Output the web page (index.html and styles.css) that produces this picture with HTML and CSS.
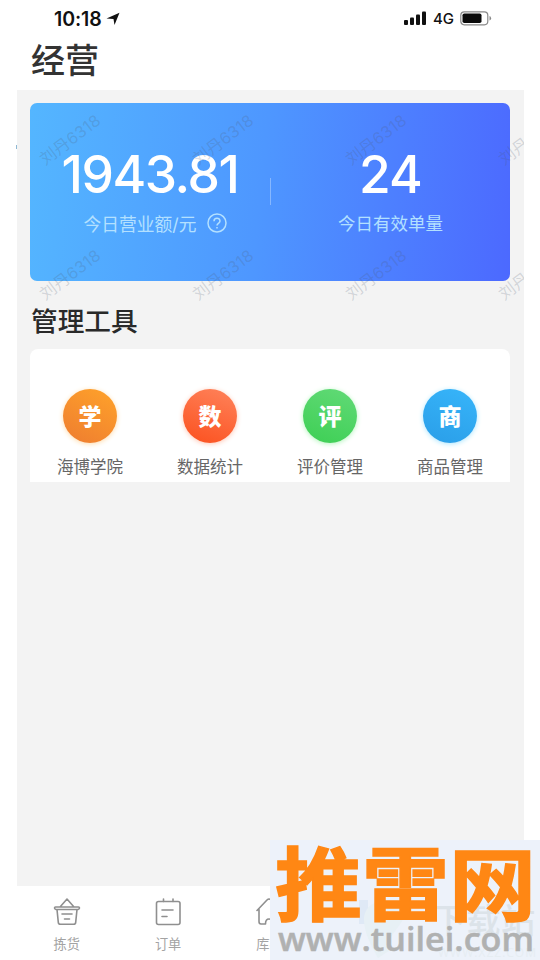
FILE: index.html
```html
<!DOCTYPE html>
<html lang="zh-CN">
<head>
<meta charset="utf-8">
<title>经营</title>
<link rel="stylesheet" href="styles.css">
</head>
<body>
<header class="status">
  <div class="clock"><span>10:18</span>
    <svg width="14" height="14" viewBox="0 0 14 14"><path d="M13.500 .8 8.500 13 7.500 7 .5 6.500z" fill="#111"/></svg>
  </div>
  <div class="signals">
    <svg width="23" height="15" viewBox="0 0 23 15" fill="#111"><rect x="0" y="9" width="4" height="5" rx="1"/><rect x="6" y="6.500" width="4" height="7.500" rx="1"/><rect x="12" y="3.500" width="4" height="10.500" rx="1"/><rect x="18" y="0.500" width="4" height="13.500" rx="1"/></svg>
    <span>4G</span>
    <svg width="32" height="15" viewBox="0 0 32 15"><rect x=".8" y=".8" width="27" height="13" rx="3.500" fill="#fff" stroke="#888" stroke-width="1.200"/><rect x="2.500" y="2.500" width="19" height="9.500" rx="1.800" fill="#0b0b0b"/><path d="M29.500 5v4.500q1.600-.6 1.600-2.250T29.500 5z" fill="#888"/></svg>
  </div>
</header>
<h1 class="title">经营</h1>
<main class="content">
  <section class="summary">
    <div class="metric sales">
      <strong>1943.81</strong>
      <p>今日营业额/元
        <svg width="20" height="20" viewBox="0 0 20 20" fill="none" stroke="#b3e0ff" stroke-width="1.500"><circle cx="10" cy="10" r="9"/><path d="M7 8.200C7 4.300 13 4.300 13 8c0 2.300-3 2.300-3 4.500M10 14v1.600"/></svg>
      </p>
    </div>
    <i class="divider"></i>
    <div class="metric orders">
      <strong>24</strong>
      <p>今日有效单量</p>
    </div>
  </section>
  <h2 class="subtitle">管理工具</h2>
  <section class="tools">
    <div class="tool"><b class="orange">学</b><span>海博学院</span></div>
    <div class="tool"><b class="red">数</b><span>数据统计</span></div>
    <div class="tool"><b class="green">评</b><span>评价管理</span></div>
    <div class="tool"><b class="blue">商</b><span>商品管理</span></div>
  </section>
  <div class="marks">
    <span class="m1">刘丹6318</span><span class="m2">刘丹6318</span><span class="m3">刘丹6318</span><span class="m4">刘丹</span>
    <span class="m1 low">刘丹6318</span><span class="m2 low">刘丹6318</span><span class="m3 low">刘丹6318</span><span class="m4 low">刘丹</span>
  </div>
</main>
<i class="speck"></i>
<nav class="tabs">
  <div class="tab">
    <svg width="28" height="30" viewBox="0 0 28 30" fill="none" stroke="#8f8f8f" stroke-width="1.600" stroke-linejoin="round" stroke-linecap="round"><path d="M7 10 14 2l7 8M2.500 10h23q1 0 1 1t-1.500 1.500h-22Q1.500 12 1.500 11t1-1zM4 12.500l1.300 12.800q.2 2 2.200 2h13q2 0 2.200-2L24 12.500M9 17h10M11.500 22h5"/></svg>
    <span>拣货</span>
  </div>
  <div class="tab">
    <svg width="28" height="30" viewBox="0 0 28 30" fill="none" stroke="#8f8f8f" stroke-width="1.600" stroke-linejoin="round" stroke-linecap="round"><rect x="2.500" y="4.500" width="23.500" height="23" rx="2"/><path d="M9.500 2v2.500M19 2v2.500M8 13h11M8 19.500h5"/></svg>
    <span>订单</span>
  </div>
  <div class="tab">
    <svg width="28" height="30" viewBox="0 0 28 30" fill="none" stroke="#8f8f8f" stroke-width="1.600" stroke-linejoin="round" stroke-linecap="round"><path d="M2 13.500 12 3q2-2 4 0l10 10.500M4 12.500v12q0 2.500 2 2.500h4.500q0-5 3.500-5t3.500 5h5q2 0 2-2v-12"/></svg>
    <span>库存</span>
  </div>
  <div class="tab"></div>
  <div class="tab"></div>
</nav>
<aside class="stamp">
  <svg width="270" height="120" viewBox="0 0 270 120">
    <rect width="270" height="120" fill="#edf2fa"/>
    <path d="M89 60h9v24h-9z" fill="#dfe9f6"/>
    <path d="M94 80c0-25 38-25 40-6 0 12-18 20-15 37l-11 7c-7-13-14-25-14-38z" fill="#e7f0f5"/>
    <text class="faint-name" x="162" y="93" textLength="103" lengthAdjust="spacingAndGlyphs">下载站</text>
    <text class="faint-url" x="168" y="117" textLength="98">WWW.XZZ.COM</text>
    <text class="brand" x="5" y="73.500" textLength="261" lengthAdjust="spacingAndGlyphs">推雷网</text>
    <text class="domain" x="8" y="111" textLength="256" lengthAdjust="spacingAndGlyphs">www.tuilei.com</text>
  </svg>
</aside>
</body>
</html>
```
FILE: styles.css
```css
* { box-sizing: border-box; }
body { margin: 0; width: 540px; height: 960px; position: relative; overflow: hidden; background: #fff; font-family: Inter, "Noto Sans CJK SC", sans-serif; display: flex; flex-direction: column; }
h1, h2, p { margin: 0; }
svg { display: block; flex: none; }
.status { height: 37px; padding: 0 48px 0 54px; display: flex; justify-content: space-between; align-items: center; color: #111; }
.clock { display: flex; align-items: center; gap: 4px; font-size: 19.500px; font-weight: 600; letter-spacing: -.1px; }
.signals { display: flex; align-items: center; gap: 6px; font-size: 15px; font-weight: 500; }
.title { height: 53px; padding-left: 31px; line-height: 47px; font-size: 34px; font-weight: 500; color: #333; }
.content { position: relative; width: 507px; height: 796px; margin-left: 17px; padding: 13px 14px 0 13px; background: #f3f3f3; overflow: hidden; }
.summary { height: 178px; border-radius: 7px; display: flex; background: linear-gradient(96deg, #54b6ff 0%, #4e97ff 48%, #4c69ff 100%); }
.metric { height: 100%; display: flex; flex-direction: column; align-items: center; padding-top: 40px; }
.sales { width: 240px; }
.orders { width: 239px; }
.metric strong { line-height: 62px; font-size: 51.500px; font-weight: 500; color: #fff; letter-spacing: -1.400px; }
.orders strong { letter-spacing: -.8px; }
.metric p { display: flex; align-items: center; gap: 10px; height: 26px; margin-top: 5px; font-size: 17.500px; color: #b3e0ff; }
.sales p { padding-left: 10px; font-size: 17.800px; }
.orders p { margin-top: 4px; }
.divider { width: 1px; height: 27px; margin-top: 75px; background: #86b7ff; }
.subtitle { height: 68px; padding-left: 1px; line-height: 80px; font-size: 26.700px; font-weight: 500; color: #292929; }
.tools { height: 133px; background: #fff; border-radius: 8px 8px 0 0; display: grid; grid-template-columns: repeat(4, 120px); padding-top: 40px; }
.tool { display: flex; flex-direction: column; align-items: center; gap: 11px; }
.tool b { width: 54px; height: 54px; border-radius: 50%; line-height: 56px; text-align: center; font-size: 23px; font-weight: 900; color: #fff; }
.tool span { font-size: 16.500px; line-height: 26px; color: #666; }
.orange { background: linear-gradient(210deg, #ffa32a, #ee7c30); box-shadow: 0 1px 5px #ffdcab; }
.red { background: linear-gradient(200deg, #ff835b, #fb501e); box-shadow: 0 1px 5px #ffc7b4; }
.green { background: linear-gradient(200deg, #62da77, #3dcf54); box-shadow: 0 1px 5px #b5f5bd; }
.blue { background: linear-gradient(200deg, #37b5fa, #2a9ee8); box-shadow: 0 1px 5px #aee7ff; }
.marks span { position: absolute; top: 37px; width: 76px; line-height: 22px; font-size: 16.300px; letter-spacing: .3px; color: rgba(80, 90, 110, .21); transform: rotate(-37deg); white-space: nowrap; }
.marks .m1 { left: 17px; }
.marks .m2 { left: 170px; }
.marks .m3 { left: 323px; }
.marks .m4 { left: 476px; }
.marks .low { top: 172px; }
.speck { position: absolute; left: 16px; top: 145px; width: 1px; height: 4px; background: #8fb9d4; }
.tabs { display: flex; height: 74px; padding: 11px 17px 0 16px; }
.tab { width: 101.400px; display: flex; flex-direction: column; align-items: center; gap: 7px; }
.tab span { font-size: 13.200px; line-height: 20px; color: #a3a3a3; }
.stamp { position: absolute; left: 270px; top: 840px; }
.brand { font: 700 80px "Noto Sans CJK SC", sans-serif; fill: #ff8714; stroke: #ff8714; stroke-width: 1.400px; }
.domain { font: 600 33px "Open Sans", sans-serif; fill: #b0b1b1; stroke: #b0b1b1; stroke-width: .5px; }
.faint-name { font: 500 34px "Noto Sans CJK SC", sans-serif; fill: #dce3e9; }
.faint-url { font: 12px "Open Sans", sans-serif; fill: #e6edf2; }
```
